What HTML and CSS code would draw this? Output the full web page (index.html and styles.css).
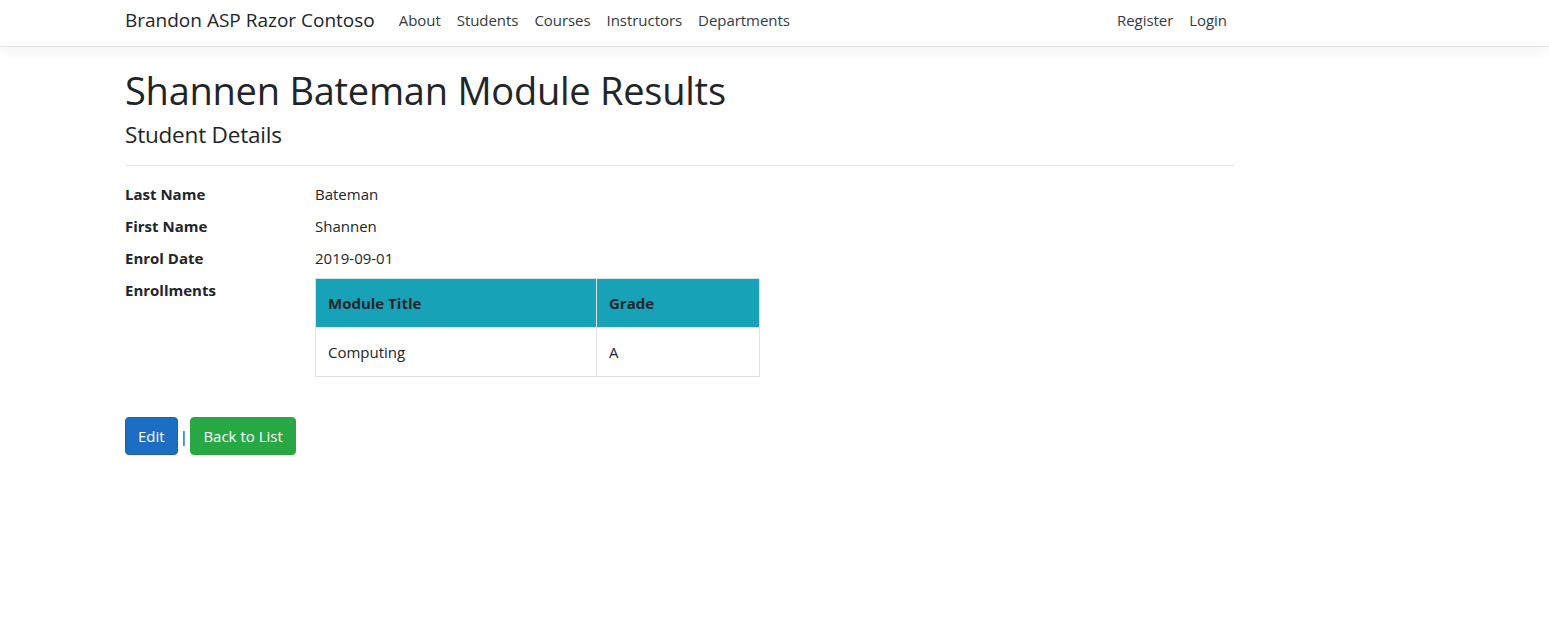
FILE: index.html
```html
<!DOCTYPE html>
<html lang="en">
<head>
<meta charset="utf-8">
<title>Details - Brandon ASP Razor Contoso</title>
<link rel="stylesheet" href="styles.css">
</head>
<body>
<header class="navbar">
  <div class="nav-inner">
    <a class="brand" href="#">Brandon ASP Razor Contoso</a>
    <ul class="nav-links">
      <li><a href="#">About</a></li>
      <li><a href="#">Students</a></li>
      <li><a href="#">Courses</a></li>
      <li><a href="#">Instructors</a></li>
      <li><a href="#">Departments</a></li>
    </ul>
    <ul class="nav-links nav-right">
      <li><a href="#">Register</a></li>
      <li><a href="#">Login</a></li>
    </ul>
  </div>
</header>
<main class="container">
  <h1 class="title">Shannen Bateman Module Results</h1>
  <h4 class="subtitle">Student Details</h4>
  <hr class="rule">
  <dl class="details">
    <dt>Last Name</dt>
    <dd>Bateman</dd>
    <dt>First Name</dt>
    <dd>Shannen</dd>
    <dt>Enrol Date</dt>
    <dd>2019-09-01</dd>
    <dt>Enrollments</dt>
    <dd>
      <table class="grid">
        <thead>
          <tr><th class="col-title">Module Title</th><th class="col-grade">Grade</th></tr>
        </thead>
        <tbody>
          <tr><td>Computing</td><td>A</td></tr>
        </tbody>
      </table>
    </dd>
  </dl>
  <div class="actions">
    <a class="btn btn-primary" href="#">Edit</a>
    <span class="sep">|</span>
    <a class="btn btn-success" href="#">Back to List</a>
  </div>
</main>
</body>
</html>
```

FILE: styles.css
```css
* { box-sizing: border-box; }
html, body { margin: 0; padding: 0; }
body {
  font-family: "Open Sans", "Noto Sans", "Liberation Sans", sans-serif;
  font-size: 16px;
  line-height: 1.5;
  color: #212529;
  background: #fff;
}
a { text-decoration: none; }

.navbar {
  height: 47px;
  border-bottom: 1px solid #e5e5e5;
  box-shadow: 0 4px 12px rgba(0,0,0,0.05);
  background: #fff;
}
.nav-inner {
  width: 1140px;
  margin-left: 110px;
  padding: 0 15px 6px;
  height: 46px;
  display: flex;
  align-items: center;
}
.brand {
  font-size: 19px;
  color: #212529;
  margin-right: 16px;
  letter-spacing: 0;
}
.nav-links {
  list-style: none;
  margin: 0;
  padding: 0;
  display: flex;
}
.nav-links a {
  display: block;
  padding: 0 8px;
  font-size: 15px;
  color: #343a40;
  letter-spacing: -0.05px;
}
.nav-right { margin-left: auto; }

.container {
  width: 1140px;
  margin-left: 110px;
  padding: 21px 15px 0;
}
.title {
  font-size: 38px;
  font-weight: 400;
  line-height: 1.2;
  margin: 0 0 7px;
  letter-spacing: -0.25px;
}
.subtitle {
  font-size: 22.5px;
  font-weight: 400;
  line-height: 1.28;
  margin: 0 0 8px;
  letter-spacing: -0.2px;
}
.rule {
  border: 0;
  border-top: 1px solid rgba(0,0,0,0.1);
  margin: 16px 0;
}
.details {
  display: grid;
  grid-template-columns: 190px 1fr;
  margin: 0 0 16px;
  font-size: 15px;
}
.details dt {
  font-weight: 700;
  line-height: 24px;
}
.details dd {
  margin: 0 0 8px;
  line-height: 24px;
}
.grid {
  border-collapse: collapse;
  margin-bottom: 16px;
  font-size: 15px;
}
.grid th, .grid td {
  border: 1px solid #dee2e6;
  padding: 12px;
  text-align: left;
  line-height: 24px;
}
.grid thead th {
  background: #17a2b8;
  font-weight: 700;
  color: #212529;
}
.col-title { width: 281px; }
.col-grade { width: 163px; }

.actions {
  display: flex;
  align-items: center;
  gap: 2px;
}
.btn {
  display: inline-block;
  padding: 6px 12px;
  font-size: 15px;
  line-height: 24px;
  border: 1px solid transparent;
  border-radius: 4px;
  color: #fff;
}
.btn-primary { background: #1b6ec2; border-color: #1861ac; }
.btn-success { background: #28a745; border-color: #28a745; padding: 6px 12.5px; }
.sep { font-size: 15px; color: #212529; }
```
